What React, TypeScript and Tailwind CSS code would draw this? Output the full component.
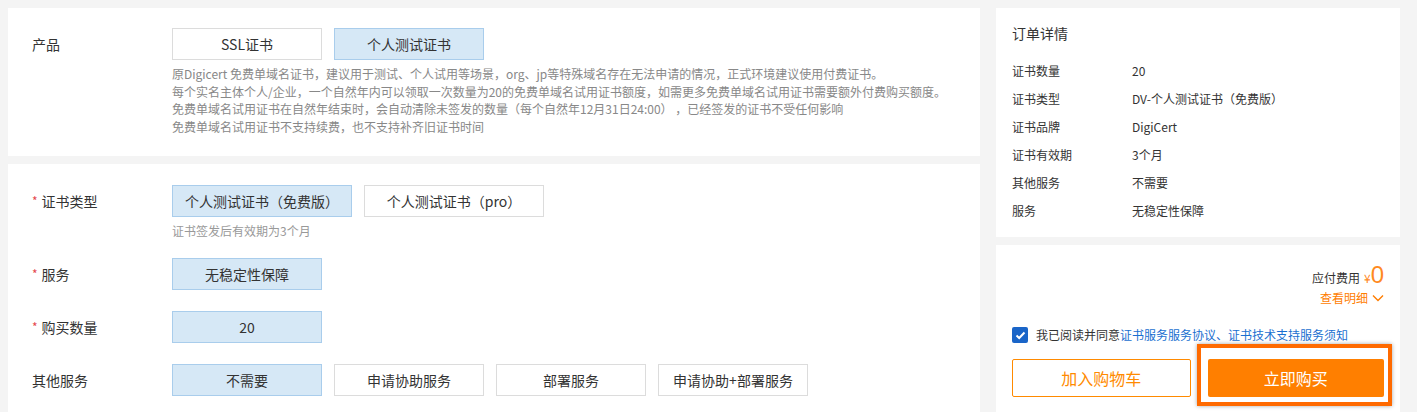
import React from "react";

const FONT = "font-['Noto_Sans_CJK_SC','Noto_Sans',sans-serif]";

function Btn({ children, selected, w }: { children: React.ReactNode; selected?: boolean; w: string }) {
  return (
    <div
      className={`${w} h-[32px] flex items-center justify-center text-[14px] text-[#333] border ${
        selected ? "bg-[#d6e8f6] border-[#a9cdec]" : "bg-white border-[#dcdcdc]"
      }`}
    >
      {children}
    </div>
  );
}

function Label({ children, required }: { children: React.ReactNode; required?: boolean }) {
  return (
    <div className="w-[140px] shrink-0 h-[32px] flex items-center text-[14px] text-[#333]">
      {required && <span className="text-[#e5484d] text-[12px] mr-[4px] leading-none">*</span>}
      {children}
    </div>
  );
}

function DetailRow({ k, v }: { k: string; v: string }) {
  return (
    <div className="h-[28px] flex items-center text-[12px] text-[#333]">
      <div className="w-[120px] shrink-0">{k}</div>
      <div>{v}</div>
    </div>
  );
}

export default function App() {
  return (
    <div className={`${FONT} w-[1417px] h-[412px] overflow-hidden bg-[#f4f4f4] pt-2 px-2 flex gap-4`}>
      {/* Left column */}
      <div className="w-[972px] shrink-0 flex flex-col gap-2">
        <div className="bg-white h-[148px] pt-[20px] pl-[24px]">
          <div className="flex">
            <Label>产品</Label>
            <div className="flex flex-col">
              <div className="flex gap-[12px]">
                <Btn w="w-[150px]">SSL证书</Btn>
                <Btn w="w-[150px]" selected>
                  个人测试证书
                </Btn>
              </div>
              <div className="mt-[5px] text-[12px] leading-[17.7px] text-[#888]">
                <div>原Digicert 免费单域名证书，建议用于测试、个人试用等场景，org、jp等特殊域名存在无法申请的情况，正式环境建议使用付费证书。</div>
                <div>每个实名主体个人/企业，一个自然年内可以领取一次数量为20的免费单域名试用证书额度，如需更多免费单域名试用证书需要额外付费购买额度。</div>
                <div>免费单域名试用证书在自然年结束时，会自动清除未签发的数量（每个自然年12月31日24:00） ，已经签发的证书不受任何影响</div>
                <div>免费单域名试用证书不支持续费，也不支持补齐旧证书时间</div>
              </div>
            </div>
          </div>
        </div>

        <div className="bg-white flex-1 pt-[21px] pl-[24px]">
          <div className="flex">
            <Label required>证书类型</Label>
            <div className="flex flex-col">
              <div className="flex gap-[12px]">
                <Btn w="w-[180px]" selected>
                  个人测试证书（免费版）
                </Btn>
                <Btn w="w-[180px]">个人测试证书（pro）</Btn>
              </div>
              <div className="mt-[5px] text-[12px] leading-[18px] text-[#999]">证书签发后有效期为3个月</div>
            </div>
          </div>
          <div className="flex mt-[18px]">
            <Label required>服务</Label>
            <Btn w="w-[150px]" selected>
              无稳定性保障
            </Btn>
          </div>
          <div className="flex mt-[21px]">
            <Label required>购买数量</Label>
            <Btn w="w-[150px]" selected>
              20
            </Btn>
          </div>
          <div className="flex mt-[21px]">
            <Label>其他服务</Label>
            <div className="flex gap-[12px]">
              <Btn w="w-[150px]" selected>
                不需要
              </Btn>
              <Btn w="w-[150px]">申请协助服务</Btn>
              <Btn w="w-[150px]">部署服务</Btn>
              <Btn w="w-[150px]">申请协助+部署服务</Btn>
            </div>
          </div>
        </div>
      </div>

      {/* Right column */}
      <div className="w-[404px] shrink-0 flex flex-col gap-2">
        <div className="bg-white h-[229px] px-4 pt-[15px]">
          <div className="text-[14px] leading-[20px] text-[#333]">订单详情</div>
          <div className="mt-[14px]">
            <DetailRow k="证书数量" v="20" />
            <DetailRow k="证书类型" v="DV-个人测试证书（免费版）" />
            <DetailRow k="证书品牌" v="DigiCert" />
            <DetailRow k="证书有效期" v="3个月" />
            <DetailRow k="其他服务" v="不需要" />
            <DetailRow k="服务" v="无稳定性保障" />
          </div>
        </div>

        <div className="bg-white flex-1 px-4 pt-[18px] relative">
          <div className="flex justify-end items-baseline">
            <span className="text-[12px] text-[#333]">应付费用</span>
            <span className="text-[12px] text-[#ff8a1f] ml-[4px]">¥</span>
            <span className="font-['Liberation_Sans',sans-serif] text-[24px] leading-none text-[#ff8a1f]">0</span>
          </div>
          <div className="mt-[2px] flex justify-end items-center text-[12px] leading-[18px] text-[#ff7d00]">
            <span>查看明细</span>
            <svg width="12" height="8" viewBox="0 0 12 8" className="ml-[4px]">
              <polyline points="1,1.5 6,6.5 11,1.5" fill="none" stroke="#ff7d00" strokeWidth="1.4" />
            </svg>
          </div>
          <div className="mt-[20px] flex items-center h-[16px] text-[12px]">
            <div className="w-[16px] h-[16px] rounded-[2px] bg-[#1a65c8] flex items-center justify-center">
              <svg width="11" height="9" viewBox="0 0 11 9">
                <polyline points="1.5,4.5 4.2,7 9.5,1.5" fill="none" stroke="white" strokeWidth="2" />
              </svg>
            </div>
            <span className="ml-[8px] text-[#333]">我已阅读并同意</span>
            <span className="text-[#1a6fd0]">证书服务服务协议、证书技术支持服务须知</span>
          </div>
          <div className="mt-[16px] flex gap-[17px]">
            <div className="flex-1 h-[38px] border border-[#ff8a00] rounded-[2px] flex items-center justify-center text-[16px] text-[#ff8a00] bg-white">
              加入购物车
            </div>
            <div className="flex-1 h-[38px] bg-[#ff7f00] rounded-[2px] flex items-center justify-center text-[16px] text-white">
              立即购买
            </div>
          </div>
          <div className="absolute left-[201px] top-[99px] w-[195px] h-[62px] border-[4px] border-[#ff6a00] shadow-[0_0_4px_rgba(0,0,0,0.35)] pointer-events-none" />
        </div>
      </div>
    </div>
  );
}
